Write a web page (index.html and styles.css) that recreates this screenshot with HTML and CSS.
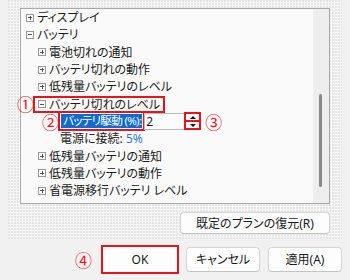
FILE: index.html
```html
<!DOCTYPE html>
<html lang="ja">
<head>
<meta charset="utf-8">
<link rel="stylesheet" href="styles.css">
</head>
<body>
<div class="window">
  <div class="panel">
    <div class="tree">
      <ul class="items">
        <li class="row l0"><span class="tg plus"></span><span class="lbl">ディスプレイ</span></li>
        <li class="row l0"><span class="tg"></span><span class="lbl">バッテリ</span></li>
        <li class="row l1"><span class="tg plus"></span><span class="lbl">電池切れの通知</span></li>
        <li class="row l1"><span class="tg plus"></span><span class="lbl">バッテリ切れの動作</span></li>
        <li class="row l1"><span class="tg plus"></span><span class="lbl">低残量バッテリのレベル</span></li>
        <li class="row l1"><span class="mark mark1"><span class="tg"></span><span class="lbl">バッテリ切れのレベル</span></span><span class="num n1">①</span></li>
        <li class="row setting">
          <span class="num n2">②</span>
          <span class="sel">バッテリ駆動 (%):</span>
          <span class="input">2</span>
          <span class="spin"><span class="sb up"></span><span class="sb down"></span></span>
          <span class="num n3">③</span>
        </li>
        <li class="row l2"><span class="lbl">電源に接続: <span class="val">5%</span></span></li>
        <li class="row l1"><span class="tg plus"></span><span class="lbl">低残量バッテリの通知</span></li>
        <li class="row l1"><span class="tg plus"></span><span class="lbl">低残量バッテリの動作</span></li>
        <li class="row l1"><span class="tg plus"></span><span class="lbl">省電源移行バッテリ レベル</span></li>
      </ul>
      <div class="scroll"><div class="thumb"></div></div>
    </div>
    <div class="restore-row"><button class="btn restore">既定のプランの復元(R)</button></div>
  </div>
  <div class="actions">
    <span class="num n4">④</span>
    <span class="okbox"><button class="btn ok">OK</button></span>
    <button class="btn">キャンセル</button>
    <button class="btn">適用(A)</button>
  </div>
</div>
</body>
</html>
```

FILE: styles.css
```css
html, body {
  margin: 0;
  padding: 0;
}
body {
  width: 350px;
  height: 280px;
  overflow: hidden;
  background: #f1f1f1;
  font-family: "Noto Sans", "Noto Sans CJK JP", sans-serif;
  font-size: 12px;
  color: #1a1a1a;
  font-feature-settings: "palt";
}
.window {
  display: flex;
  flex-direction: column;
  height: 280px;
  padding: 0 8px 0 8px;
  box-sizing: border-box;
}
.panel {
  background-color: #f6f6f6;
  background-image: radial-gradient(circle at 1px 1px, #e4e4e4 0.7px, transparent 1px);
  background-size: 3px 3px;
  padding: 8px 12px 5px 12px;
  width: 334px;
  box-sizing: border-box;
  display: flex;
  flex-direction: column;
  gap: 8px;
}
.tree {
  height: 196px;
  box-sizing: border-box;
  border: 1px solid #a9a9ad;
  background: #fafafa;
  display: flex;
}
.items {
  list-style: none;
  margin: 0;
  padding: 0;
  flex: 1;
}
.row {
  height: 17.3px;
  display: flex;
  align-items: center;
  white-space: nowrap;
  position: relative;
}
.l0 { padding-left: 5px; }
.l1 { padding-left: 17px; }
.l2 { padding-left: 39px; }
.tg {
  width: 8px;
  height: 8px;
  box-sizing: border-box;
  border: 1px solid #9a9a9a;
  background: #fdfdfd;
  position: relative;
  margin-right: 3px;
  flex: none;
}
.tg::before {
  content: "";
  position: absolute;
  left: 1px;
  top: 2.5px;
  width: 4px;
  height: 1px;
  background: #555;
}
.tg.plus::after {
  content: "";
  position: absolute;
  left: 2.5px;
  top: 1px;
  width: 1px;
  height: 4px;
  background: #555;
}
.lbl { line-height: 17px; }
.mark {
  display: flex;
  align-items: center;
  margin-left: -5px;
  padding: 0 3px 0 3px;
  height: 17px;
  border: 2px solid #e8141c;
  box-sizing: border-box;
}
.num {
  color: #e8141c;
  font-size: 17px;
  line-height: 17px;
  font-family: "Noto Sans CJK JP", sans-serif;
  font-feature-settings: normal;
}
.n1 { position: absolute; left: -4px; top: 0; }
.n2 { position: absolute; left: 21px; top: 0; }
.n3 { margin-left: 4px; }
.n4 { margin-right: 1px; }
.setting { padding-left: 40px; }
.sel {
  background: #0f6bd2;
  color: #fff;
  line-height: 14px;
  padding: 0 1px 0 2px;
  letter-spacing: -0.7px;
  font-size: 11.6px;
  outline: 2px solid #e8141c;
  outline-offset: 1px;
}
.input {
  margin-left: 2px;
  width: 40px;
  height: 17px;
  box-sizing: border-box;
  border: 1px solid #b9b9b9;
  border-right: none;
  background: #fcfcfc;
  padding-left: 1px;
  line-height: 15px;
}
.spin {
  width: 17px;
  height: 18px;
  box-sizing: border-box;
  border: 2px solid #e8141c;
  display: flex;
  flex-direction: column;
  background: #fff;
}
.sb {
  flex: 1;
  display: flex;
  align-items: center;
  justify-content: center;
}
.sb.up { border-bottom: 2px solid #e8141c; }
.sb.up::before {
  content: "";
  border-left: 3px solid transparent;
  border-right: 3px solid transparent;
  border-bottom: 3px solid #111;
}
.sb.down::before {
  content: "";
  border-left: 3px solid transparent;
  border-right: 3px solid transparent;
  border-top: 3px solid #111;
}
.val { color: #2b7bd6; }
.scroll {
  width: 16px;
  background: #eeeeee;
  flex: none;
  position: relative;
}
.thumb {
  position: absolute;
  left: 6px;
  top: 85px;
  width: 3px;
  height: 93px;
  border-radius: 2px;
  background: #8a8a8a;
}
.restore-row {
  display: flex;
  justify-content: flex-end;
}
.btn {
  font-family: "Noto Sans", "Noto Sans CJK JP", sans-serif;
  font-feature-settings: "palt";
  font-size: 12px;
  color: #1b1b1b;
  background: #fdfdfd;
  border: 1px solid #d3d3d3;
  border-bottom-color: #c4c4c4;
  border-radius: 4px;
  height: 25px;
  width: 74px;
  padding: 0;
  margin: 0;
}
.restore {
  width: 150px;
  height: 22px;
}
.actions {
  flex: 1;
  display: flex;
  align-items: center;
  justify-content: flex-end;
  gap: 8px;
  padding-right: 0;
  padding-bottom: 1px;
}
.okbox {
  display: flex;
  border: 2px solid #e8141c;
  margin-right: -1px;
}
.ok {
  border-radius: 0;
  border: none;
  width: 74px;
  height: 25px;
  background: #fdfdfd;
}
```
